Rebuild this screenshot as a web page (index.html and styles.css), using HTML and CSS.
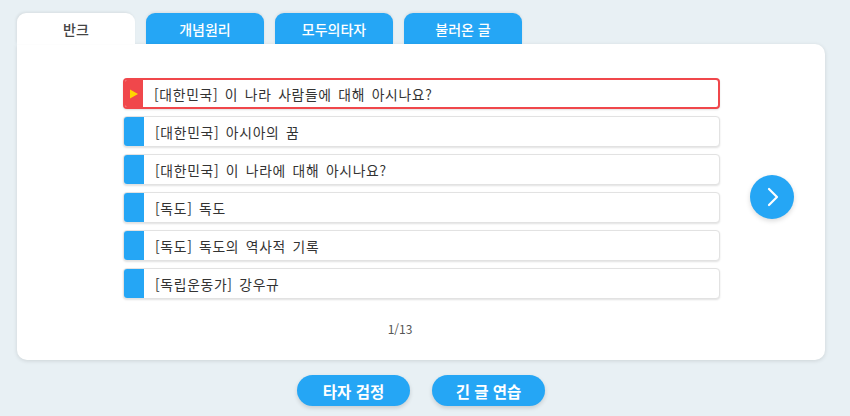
FILE: index.html
```html
<!DOCTYPE html>
<html lang="ko">
<head>
<meta charset="utf-8">
<link rel="stylesheet" href="styles.css">
</head>
<body>
<div class="page">
  <div class="tabs">
    <div class="tab active">반크</div>
    <div class="tab">개념원리</div>
    <div class="tab">모두의타자</div>
    <div class="tab">불러온 글</div>
  </div>
  <div class="panel">
    <div class="content">
      <ul class="list">
        <li class="item selected"><span class="mark"><svg width="10" height="10" viewBox="0 0 10 10"><path d="M1 0.5 L9 5 L1 9.5 Z" fill="#ffd600"/></svg></span><span class="label">[대한민국] 이 나라 사람들에 대해 아시나요?</span></li>
        <li class="item"><span class="mark"></span><span class="label">[대한민국] 아시아의 꿈</span></li>
        <li class="item"><span class="mark"></span><span class="label">[대한민국] 이 나라에 대해 아시나요?</span></li>
        <li class="item"><span class="mark"></span><span class="label">[독도] 독도</span></li>
        <li class="item"><span class="mark"></span><span class="label">[독도] 독도의 역사적 기록</span></li>
        <li class="item"><span class="mark"></span><span class="label">[독립운동가] 강우규</span></li>
      </ul>
      <button class="next"><svg width="14" height="22" viewBox="0 0 14 22"><path d="M3 3 L11 11 L3 19" fill="none" stroke="#fff" stroke-width="2.2" stroke-linecap="round" stroke-linejoin="round"/></svg></button>
    </div>
    <div class="pager">1/13</div>
  </div>
  <div class="actions">
    <button class="action">타자 검정</button>
    <button class="action">긴 글 연습</button>
  </div>
</div>
</body>
</html>
```
FILE: styles.css
```css
* { box-sizing: border-box; }
html, body { margin: 0; padding: 0; }
body {
  background: #e8f0f4;
  font-family: "Noto Sans CJK KR", "Noto Sans", sans-serif;
  color: #333;
  width: 850px;
  height: 416px;
  overflow: hidden;
}
.page {
  padding: 13px 0 0 17px;
  width: 825px;
}
.tabs {
  display: flex;
  gap: 11px;
  height: 31px;
}
.tab {
  width: 118px;
  height: 31px;
  border-radius: 9px 9px 0 0;
  background: #25a6f5;
  color: #fff;
  font-size: 14px;
  font-weight: 500;
  display: flex;
  align-items: center;
  justify-content: center;
  box-shadow: 0 -1px 3px rgba(0,0,0,0.08);
}
.tab.active {
  background: #fff;
  color: #444;
  position: relative;
  z-index: 2;
  box-shadow: -1px -1px 3px rgba(0,0,0,0.08);
}
.panel {
  position: relative;
  z-index: 1;
  background: #fff;
  width: 808px;
  height: 316px;
  border-radius: 0 10px 10px 10px;
  box-shadow: 0 1px 4px rgba(0,0,0,0.12);
  padding-top: 34px;
}
.content {
  display: flex;
  align-items: flex-start;
}
.list {
  list-style: none;
  margin: 0 0 0 106px;
  padding: 0;
  width: 597px;
  display: flex;
  flex-direction: column;
  gap: 7px;
}
.item {
  height: 31px;
  display: flex;
  align-items: stretch;
  border-radius: 4px;
  border: 1px solid #e2e2e2;
  box-shadow: 0 1px 2px rgba(0,0,0,0.12);
  overflow: hidden;
  background: #fff;
}
.item .mark {
  width: 20px;
  background: #25a6f5;
  flex: none;
  display: flex;
  align-items: center;
  justify-content: center;
}
.item .label {
  padding-left: 11px;
  font-size: 13.8px;
  color: #333;
  display: flex;
  align-items: center;
  letter-spacing: 0.7px;
  word-spacing: 2px;
  white-space: pre;
}
.item.selected {
  border: 2px solid #f0474b;
}
.item.selected .mark {
  background: #f0474b;
  width: 18px;
}
.next {
  margin: 97px 0 0 30px;
  width: 44px;
  height: 44px;
  border-radius: 50%;
  border: none;
  background: #25a6f5;
  box-shadow: 0 2px 5px rgba(0,0,0,0.15);
  display: flex;
  align-items: center;
  justify-content: center;
  padding: 0 0 0 2px;
}
.pager {
  margin-top: 21px;
  padding-right: 42px;
  text-align: center;
  font-size: 12px;
  color: #555;
}
.actions {
  display: flex;
  justify-content: center;
  gap: 22px;
  margin-top: 15px;
  width: 808px;
}
.action {
  width: 113px;
  height: 31px;
  border-radius: 16px;
  border: none;
  background: #25a6f5;
  color: #fff;
  font-family: "Noto Sans CJK KR", "Noto Sans", sans-serif;
  font-size: 15.5px;
  font-weight: 700;
  box-shadow: 0 2px 4px rgba(0,0,0,0.15);
  padding: 0;
}
```
